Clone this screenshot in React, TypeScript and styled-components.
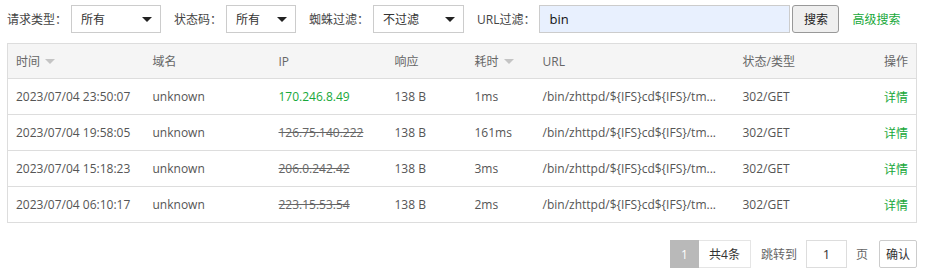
import styled, { createGlobalStyle } from "styled-components";

const GlobalStyle = createGlobalStyle`
  body {
    margin: 0;
    background: #fff;
    font-family: "Open Sans", "Noto Sans CJK SC", sans-serif;
    font-size: 12px;
    color: #555;
  }
`;

const Page = styled.div`
  padding: 5px 12px 0 7px;
  width: 910px;
`;

const Toolbar = styled.div`
  display: flex;
  align-items: center;
  height: 28px;
`;

const Label = styled.span<{ $gap: number; $lead?: number }>`
  margin-left: ${(p) => p.$lead ?? 0}px;
  margin-right: ${(p) => p.$gap}px;
  color: #444;
  white-space: nowrap;
`;

const Select = styled.div<{ $width: number }>`
  position: relative;
  box-sizing: border-box;
  width: ${(p) => p.$width}px;
  height: 28px;
  padding-left: 9px;
  display: flex;
  align-items: center;
  border: 1px solid #ccc;
  background: #fff;
  color: #333;

  &::after {
    content: "";
    position: absolute;
    right: 8px;
    top: 11px;
    border-left: 5px solid transparent;
    border-right: 5px solid transparent;
    border-top: 5px solid #222;
  }
`;

const SearchInput = styled.div`
  box-sizing: border-box;
  width: 251px;
  height: 28px;
  padding-left: 9px;
  display: flex;
  align-items: center;
  border: 1px solid #ccc;
  background: #e8f0fe;
  color: #111;
  font-size: 13px;
`;

const Button = styled.button`
  box-sizing: border-box;
  width: 47px;
  height: 28px;
  padding: 0;
  margin-left: 2px;
  border: 1px solid #999;
  border-radius: 3px;
  background: #efefef;
  color: #222;
  font: inherit;
`;

const GreenLink = styled.a`
  color: #17a83a;
  text-decoration: none;
  white-space: nowrap;
`;

const Table = styled.table`
  margin-top: 10px;
  width: 910px;
  border-collapse: collapse;
  table-layout: fixed;
  border: 1px solid #ddd;
`;

const HeadCell = styled.th<{ $right?: boolean }>`
  height: 34px;
  padding: 0 8px;
  background: #f5f5f5;
  color: #666;
  font-weight: normal;
  text-align: ${(p) => (p.$right ? "right" : "left")};
  border-bottom: 1px solid #ddd;
`;

const SortArrow = styled.span`
  display: inline-block;
  margin-left: 5px;
  vertical-align: 2px;
  border-left: 5px solid transparent;
  border-right: 5px solid transparent;
  border-top: 5px solid #c4c4c4;
`;

const Row = styled.tr`
  & + & td {
    border-top: 1px solid #ddd;
  }
`;

const Cell = styled.td<{ $right?: boolean }>`
  height: 35px;
  padding: 0 8px;
  white-space: nowrap;
  overflow: hidden;
  text-align: ${(p) => (p.$right ? "right" : "left")};
`;

const Ip = styled.span<{ $active: boolean }>`
  color: ${(p) => (p.$active ? "#17a83a" : "#666")};
  text-decoration: ${(p) => (p.$active ? "none" : "line-through")};
`;

const Pager = styled.div`
  display: flex;
  justify-content: flex-end;
  align-items: center;
  margin-top: 17px;
  height: 28px;
`;

const PageBox = styled.span<{ $width: number; $current?: boolean }>`
  box-sizing: border-box;
  width: ${(p) => p.$width}px;
  height: 28px;
  display: flex;
  align-items: center;
  justify-content: center;
  background: ${(p) => (p.$current ? "#b9b9b9" : "#fff")};
  color: ${(p) => (p.$current ? "#fff" : "#333")};
  border: 1px solid ${(p) => (p.$current ? "#b9b9b9" : "#e5e5e5")};
  border-left-width: ${(p) => (p.$current ? 1 : 0)}px;
`;

const PagerText = styled.span<{ $left: number; $right: number }>`
  margin: 0 ${(p) => p.$right}px 0 ${(p) => p.$left}px;
  color: #666;
`;

const JumpInput = styled.span`
  box-sizing: border-box;
  width: 41px;
  height: 28px;
  display: flex;
  align-items: center;
  justify-content: center;
  border: 1px solid #ddd;
  color: #333;
  font-size: 13px;
`;

const ConfirmButton = styled.button`
  box-sizing: border-box;
  height: 28px;
  width: 38px;
  padding: 0;
  border: 1px solid #ccc;
  border-radius: 2px;
  background: #fff;
  color: #333;
  font: inherit;
`;

const rows = [
  { time: "2023/07/04 23:50:07", ip: "170.246.8.49", active: true, cost: "1ms" },
  { time: "2023/07/04 19:58:05", ip: "126.75.140.222", active: false, cost: "161ms" },
  { time: "2023/07/04 15:18:23", ip: "206.0.242.42", active: false, cost: "3ms" },
  { time: "2023/07/04 06:10:17", ip: "223.15.53.54", active: false, cost: "2ms" },
];

const App = () => {
  return (
    <Page>
      <GlobalStyle />
      <Toolbar>
        <Label $gap={4}>请求类型：</Label>
        <Select $width={90}>所有</Select>
        <Label $lead={13} $gap={4}>状态码：</Label>
        <Select $width={70}>所有</Select>
        <Label $lead={13} $gap={4}>蜘蛛过滤：</Label>
        <Select $width={91}>不过滤</Select>
        <Label $lead={13} $gap={4}>URL过滤：</Label>
        <SearchInput>bin</SearchInput>
        <Button>搜索</Button>
        <Label $lead={13} $gap={0}>
          <GreenLink href="#">高级搜索</GreenLink>
        </Label>
      </Toolbar>

      <Table>
        <colgroup>
          <col style={{ width: 137 }} />
          <col style={{ width: 126 }} />
          <col style={{ width: 116 }} />
          <col style={{ width: 80 }} />
          <col style={{ width: 68 }} />
          <col style={{ width: 200 }} />
          <col style={{ width: 120 }} />
          <col />
        </colgroup>
        <thead>
          <tr>
            <HeadCell>
              时间<SortArrow />
            </HeadCell>
            <HeadCell>域名</HeadCell>
            <HeadCell>IP</HeadCell>
            <HeadCell>响应</HeadCell>
            <HeadCell>
              耗时<SortArrow />
            </HeadCell>
            <HeadCell>URL</HeadCell>
            <HeadCell>状态/类型</HeadCell>
            <HeadCell $right>操作</HeadCell>
          </tr>
        </thead>
        <tbody>
          {rows.map((r) => (
            <Row key={r.time}>
              <Cell>{r.time}</Cell>
              <Cell>unknown</Cell>
              <Cell>
                <Ip $active={r.active}>{r.ip}</Ip>
              </Cell>
              <Cell>138 B</Cell>
              <Cell>{r.cost}</Cell>
              <Cell>/bin/zhttpd/${"{IFS}"}cd${"{IFS}"}/tm...</Cell>
              <Cell>302/GET</Cell>
              <Cell $right>
                <GreenLink href="#">详情</GreenLink>
              </Cell>
            </Row>
          ))}
        </tbody>
      </Table>

      <Pager>
        <PageBox $current $width={29}>1</PageBox>
        <PageBox $width={52}>共4条</PageBox>
        <PagerText $left={10} $right={9}>跳转到</PagerText>
        <JumpInput>1</JumpInput>
        <PagerText $left={9} $right={11}>页</PagerText>
        <ConfirmButton>确认</ConfirmButton>
      </Pager>
    </Page>
  );
};

export default App;
